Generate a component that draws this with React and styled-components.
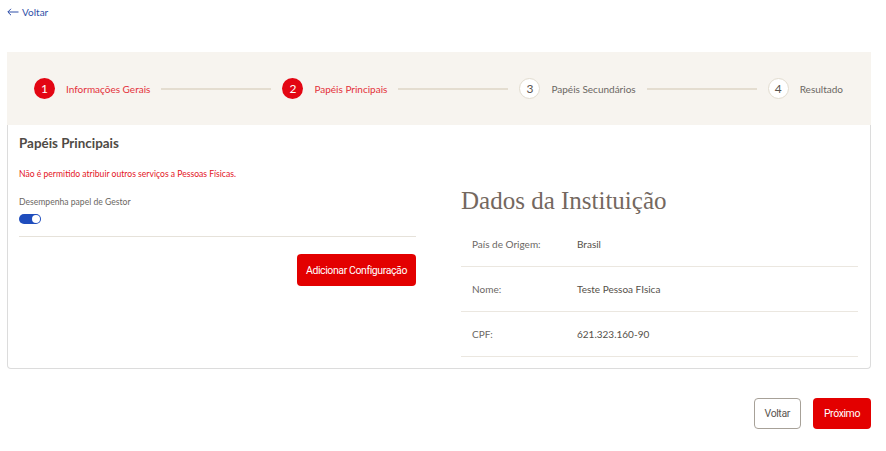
import React, { useState } from 'react'
import styled, { createGlobalStyle } from 'styled-components'

const GlobalStyle = createGlobalStyle`
    body {
        margin: 0;
        background: #fff;
        font-family: Lato, 'Noto Sans', sans-serif;
    }
`

const Page = styled.div`
    width: 864px;
    padding: 0 15px 0 7px;
`

const BackLink = styled.a`
    display: flex;
    align-items: center;
    gap: 3px;
    width: fit-content;
    padding-top: 5px;
    height: 14px;
    font-size: 10px;
    color: #2f4fa8;
    text-decoration: none;
    cursor: pointer;
`

const Stepper = styled.div`
    display: flex;
    align-items: center;
    gap: 11px;
    height: 73px;
    margin-top: 33px;
    padding: 0 28px 0 27px;
    background: #f7f4ef;
`

const Step = styled.div`
    display: flex;
    align-items: center;
    gap: 11px;
    white-space: nowrap;
`

const Circle = styled.span`
    display: flex;
    align-items: center;
    justify-content: center;
    width: 21px;
    height: 21px;
    border-radius: 50%;
    box-sizing: border-box;
    font-size: 12px;
    background: ${p => (p.$active ? '#e30613' : '#fff')};
    color: ${p => (p.$active ? '#fff' : '#5a5550')};
    border: ${p => (p.$active ? 'none' : '1.5px solid #e2dccf')};
`

const StepLabel = styled.span`
    font-size: 10px;
    color: ${p => (p.$active ? '#e4313a' : '#6b6763')};
`

const Line = styled.div`
    flex: 1;
    height: 2px;
    background: #e4ddd0;
`

const Card = styled.div`
    border: 1px solid #dcdcdc;
    border-top: none;
    border-radius: 0 0 4px 4px;
    padding: 8px 12px 11px 11px;
`

const Title = styled.h2`
    margin: 0;
    font-size: 13.4px;
    line-height: 20px;
    font-weight: 700;
    color: #4f4a45;
`

const Columns = styled.div`
    display: grid;
    grid-template-columns: 1fr 1fr;
    gap: 45px;
`

const Column = styled.div`
    display: flex;
    flex-direction: column;
`

const Warning = styled.p`
    margin: 14px 0 0;
    font-size: 8.6px;
    line-height: 14px;
    color: #e4141e;
`

const FieldLabel = styled.span`
    margin-top: 14px;
    font-size: 8.6px;
    line-height: 14px;
    color: #6b6763;
`

const Toggle = styled.button`
    position: relative;
    margin-top: 5px;
    width: 22px;
    height: 10px;
    padding: 0;
    border: none;
    border-radius: 5px;
    background: ${p => (p.$on ? '#1f4dbd' : '#bdb8b0')};
    cursor: pointer;

    &::after {
        content: '';
        position: absolute;
        top: 1px;
        left: ${p => (p.$on ? '13px' : '1px')};
        width: 8px;
        height: 8px;
        border-radius: 50%;
        background: #fff;
    }
`

const Divider = styled.hr`
    width: 100%;
    margin: 12px 0 0;
    border: none;
    border-top: 1px solid #e6e2da;
`

const Actions = styled.div`
    display: flex;
    justify-content: flex-end;
    gap: 12px;
    margin-top: ${p => p.$top || 0}px;
`

const Button = styled.button`
    height: ${p => p.$h || 32}px;
    padding: 0 ${p => p.$pad || 11}px;
    border-radius: 4px;
    font-family: Roboto, 'Liberation Sans', Arial, sans-serif;
    font-size: 10.5px;
    letter-spacing: -0.4px;
    cursor: pointer;
    background: ${p => (p.$primary ? '#e30000' : '#fff')};
    color: ${p => (p.$primary ? '#fff' : '#5a5550')};
    border: ${p => (p.$primary ? 'none' : '1px solid #a7a198')};
`

const InfoTitle = styled.h1`
    margin: 33px 0 0;
    font-family: 'Liberation Serif', 'DejaVu Serif', serif;
    font-weight: 400;
    font-size: 25px;
    line-height: 30px;
    color: #74685f;
`

const InfoList = styled.div`
    margin-top: 6px;
`

const InfoRow = styled.div`
    display: grid;
    grid-template-columns: 105px 1fr;
    align-items: center;
    height: 44px;
    padding-left: 11px;
    border-bottom: 1px solid #ebe7e0;
    font-size: 10px;
`

const InfoLabel = styled.span`
    color: #6b6763;
`

const InfoValue = styled.span`
    color: #555049;
`

const steps = ['Informações Gerais', 'Papéis Principais', 'Papéis Secundários', 'Resultado']

const info = [
    ['País de Origem:', 'Brasil'],
    ['Nome:', 'Teste Pessoa FIsica'],
    ['CPF:', '621.323.160-90'],
]

const App = () => {
    const [gestor, setGestor] = useState(true)

    return (
        <>
            <GlobalStyle />
            <Page>
                <BackLink>
                    <svg width="12" height="8" viewBox="0 0 12 8" fill="none" stroke="#2f4fa8" strokeWidth="1">
                        <path d="M11.5 4H1M4 0.8L0.8 4L4 7.2" />
                    </svg>
                    Voltar
                </BackLink>

                <Stepper>
                    {steps.map((s, i) => (
                        <React.Fragment key={s}>
                            {i > 0 && <Line />}
                            <Step>
                                <Circle $active={i < 2}>{i + 1}</Circle>
                                <StepLabel $active={i < 2}>{s}</StepLabel>
                            </Step>
                        </React.Fragment>
                    ))}
                </Stepper>

                <Card>
                    <Title>Papéis Principais</Title>
                    <Columns>
                        <Column>
                            <Warning>Não é permitido atribuir outros serviços a Pessoas Físicas.</Warning>
                            <FieldLabel>Desempenha papel de Gestor</FieldLabel>
                            <Toggle $on={gestor} onClick={() => setGestor(!gestor)} />
                            <Divider />
                            <Actions $top={17}>
                                <Button $primary $pad={9}>Adicionar Configuração</Button>
                            </Actions>
                        </Column>
                        <Column>
                            <InfoTitle>Dados da Instituição</InfoTitle>
                            <InfoList>
                                {info.map(([k, v]) => (
                                    <InfoRow key={k}>
                                        <InfoLabel>{k}</InfoLabel>
                                        <InfoValue>{v}</InfoValue>
                                    </InfoRow>
                                ))}
                            </InfoList>
                        </Column>
                    </Columns>
                </Card>

                <Actions $top={29}>
                    <Button $pad={10} $h={31}>Voltar</Button>
                    <Button $primary $pad={11} $h={31}>Próximo</Button>
                </Actions>
            </Page>
        </>
    )
}

export default App
